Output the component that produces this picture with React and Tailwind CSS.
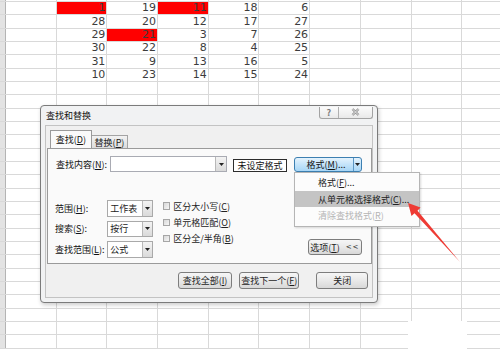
import React from 'react'

const CJK = "font-['Noto_Sans_CJK_SC',sans-serif]"

const rows = [
  [null, 1, 19, 11, 18, 6],
  [null, 28, 20, 12, 17, 27],
  [null, 29, 21, 3, 7, 26],
  [null, 30, 22, 8, 4, 25],
  [null, 31, 9, 13, 16, 5],
  [null, 10, 23, 14, 15, 24],
]
const red = { '0-1': true, '0-3': true, '2-2': true }

function Tri({ color = '#222' }) {
  return (
    <svg width="5" height="3" viewBox="0 0 5 3">
      <path d="M0 0H5L2.5 3Z" fill={color} />
    </svg>
  )
}

function U({ children }) {
  return <span className="underline underline-offset-1">{children}</span>
}

function Sheet() {
  const all = Array.from({ length: 27 }, (_, i) => (i === 0 ? null : rows[i - 1] || []))
  return (
    <div className="flex flex-col">
      {all.map((r, i) => (
        <div key={i} className={`flex border-b border-[#d9d9d9] ${i === 0 ? 'h-[2px]' : 'h-[13.33px]'}`}>
          <div className="w-[6px] shrink-0 bg-[#e3e3e3] border-r border-[#b4b4b4]" />
          {Array.from({ length: 10 }, (_, c) => {
            const v = r ? r[c] : null
            const isRed = red[`${i - 1}-${c}`]
            return (
              <div
                key={c}
                className={`w-[50.7px] shrink-0 border-r border-[#d9d9d9] flex items-end justify-end pr-[1px] text-[11px] leading-[12px] text-[#3c3c3c] font-['DejaVu_Sans',sans-serif] ${isRed ? 'bg-[#ff0000]' : ''}`}
              >
                {v != null ? v : ''}
              </div>
            )
          })}
        </div>
      ))}
    </div>
  )
}

function Btn({ className = '', children }) {
  return (
    <div
      className={`flex items-center justify-center rounded-[3px] border border-[#7d7d7d] bg-gradient-to-b from-[#f6f6f6] via-[#e9e9e9] to-[#d8d8d8] text-[9px] leading-none text-[#1e1e1e] ${className}`}
    >
      {children}
    </div>
  )
}

function Select({ value }) {
  return (
    <div className="w-[46px] h-[16.5px] flex border border-[#a9a9a9] bg-white">
      <div className="flex-1 flex items-center pl-[2px] text-[9px] leading-none text-[#222]">{value}</div>
      <div className="w-[10px] flex items-center justify-center border-l border-[#b8b8b8] bg-gradient-to-b from-[#f3f3f3] to-[#dadada]">
        <Tri />
      </div>
    </div>
  )
}

function Check({ children }) {
  return (
    <div className="h-[12px] flex items-center gap-[3px] text-[9px] leading-none text-[#222]">
      <div className="w-[7.5px] h-[7.5px] border border-[#a6a6a6] bg-gradient-to-br from-[#d8d8d8] to-[#f6f6f6]" />
      <span>{children}</span>
    </div>
  )
}

function Dialog() {
  return (
    <div className={`absolute left-[40px] top-[105px] w-[338px] h-[198px] rounded-[4px] border border-[#7b7b7b] bg-[#f1f2f3] shadow-[1px_2px_4px_rgba(0,0,0,0.2)] flex flex-col ${CJK}`}>
      <div className="h-[19px] flex">
        <div className="pl-[5px] pt-[5px] text-[9px] leading-none text-[#111]">查找和替换</div>
        <div className="ml-auto mr-[4px] mt-[1px] h-[11.5px] flex rounded-b-[3px] border border-t-0 border-[#a3a3a3] bg-gradient-to-b from-[#fbfbfb] to-[#e9e9e9]">
          <div className="w-[19.5px] flex items-center justify-center border-r border-[#b0b0b0] text-[9px] leading-none font-bold text-[#7a7a7a]">?</div>
          <div className="w-[33px] flex items-center justify-center">
            <svg width="9" height="8" viewBox="0 0 9 8">
              <path d="M1.5 1L7.5 7M7.5 1L1.5 7" stroke="#8a8a8a" strokeWidth="2.4" />
              <path d="M1.5 1L7.5 7M7.5 1L1.5 7" stroke="#f4f4f4" strokeWidth="0.9" />
            </svg>
          </div>
        </div>
      </div>
      <div className="mx-[4px] h-[173px] border border-[#c3c3c3] bg-[#f0f0f0] flex flex-col">
        <div className="flex items-end mt-[5px] ml-[4px] h-[17px] relative z-10">
          <div className="w-[41.7px] h-[18px] flex items-center justify-center border border-b-0 border-[#9a9a9a] bg-[#fafafa] text-[9px] leading-none text-[#111]">
            查找(<U>D</U>)
          </div>
          <div className="w-[36.6px] h-[13px] flex items-center justify-center border border-l-0 border-b-0 border-[#a3a3a3] bg-gradient-to-b from-[#f2f2f2] to-[#dcdcdc] text-[9px] leading-none text-[#222]">
            替换(<U>P</U>)
          </div>
        </div>
        <div className="ml-[1px] w-[325px] h-[116px] border border-[#9a9a9a] bg-[#fafafa] flex flex-col">
          <div className="flex items-end mt-[7px] pl-[8px] h-[16px]">
            <div className="w-[54px] self-center text-[9px] leading-none text-[#111]">
              查找内容(<U>N</U>):
            </div>
            <div className="w-[117px] h-[16px] flex border border-[#a9abb3] bg-white">
              <div className="flex-1" />
              <div className="w-[11px] flex items-center justify-center border-l border-[#b8b8b8] bg-gradient-to-b from-[#f3f3f3] to-[#dadada]">
                <Tri />
              </div>
            </div>
            <div className="ml-[6px] w-[54px] h-[13px] flex items-center justify-center border border-[#2d2d2d] bg-white text-[9px] leading-none text-[#111]">
              未设定格式
            </div>
            <div className="ml-[7px] w-[68px] h-[15px] flex rounded-[3px] border border-[#3c7fb1] bg-gradient-to-b from-[#e5f3fd] via-[#c4e4fa] to-[#a7d6f6]">
              <div className="flex-1 flex items-center justify-center pl-[4px] text-[9px] leading-none text-[#111]">
                格式(<U>M</U>)...
              </div>
              <div className="w-[8px] flex items-center justify-center border-l border-[#5c96c4]">
                <Tri />
              </div>
            </div>
          </div>
          <div className="flex mt-[28px] pl-[7px] pr-[9px]">
            <div className="flex flex-col gap-[4px]">
              {[
                ['范围', 'H', '工作表'],
                ['搜索', 'S', '按行'],
                ['查找范围', 'L', '公式'],
              ].map(([l, k, v]) => (
                <div key={k} className="flex items-center">
                  <div className="w-[52.3px] text-[9px] leading-none text-[#111]">
                    {l}(<U>{k}</U>):
                  </div>
                  <Select value={v} />
                </div>
              ))}
            </div>
            <div className="ml-[9.4px] flex flex-col gap-[4.3px]">
              <Check>区分大小写(<U>C</U>)</Check>
              <Check>单元格匹配(<U>O</U>)</Check>
              <Check>区分全/半角(<U>B</U>)</Check>
            </div>
            <Btn className="ml-auto self-end mb-[2.5px] w-[54.4px] h-[15.7px] gap-[6px]">
              <span>选项(<U>T</U>)</span>
              <span className="font-['DejaVu_Sans',sans-serif] text-[7px] tracking-[1px]">&lt;&lt;</span>
            </Btn>
          </div>
        </div>
        <div className="flex justify-end mt-[7.7px] pr-[3.7px]">
          <Btn className="w-[53.4px] h-[17.6px]">查找全部(<U>I</U>)</Btn>
          <Btn className="ml-[7.6px] w-[60px] h-[17.6px]">查找下一个(<U>F</U>)</Btn>
          <Btn className="ml-[16.7px] w-[52.3px] h-[17.6px]">关闭</Btn>
        </div>
      </div>
    </div>
  )
}

function Menu() {
  return (
    <div className={`absolute left-[294px] top-[172px] w-[126px] h-[55px] border border-[#b5b5b5] bg-[#fcfcfc] shadow-[1px_1px_2px_rgba(0,0,0,0.15)] flex flex-col pt-[1px] text-[9px] leading-none ${CJK}`}>
      <div className="h-[17px] flex items-center pl-[23px] text-[#222]">
        格式(<U>F</U>)...
      </div>
      <div className="h-[16px] flex items-center pl-[23px] bg-[#c4c4c4] text-[#222]">
        从单元格选择格式(<U>C</U>)...
      </div>
      <div className="h-[16px] flex items-center pl-[23px] text-[#b4b4b4]">
        清除查找格式(<U>R</U>)
      </div>
    </div>
  )
}

export default function App() {
  return (
    <div className="relative w-[500px] h-[362px] overflow-hidden bg-white">
      <Sheet />
      <Dialog />
      <Menu />
      <div className="absolute left-[408px] top-[321px] w-[59px] h-[41px] bg-white" />
      <svg className="absolute left-0 top-0" width="500" height="362" viewBox="0 0 500 362">
        <path d="M408 203L420.5 207.5L417.5 210.7L460 262L414.5 213.3L411.5 216Z" fill="#ee3b34" />
      </svg>
    </div>
  )
}
